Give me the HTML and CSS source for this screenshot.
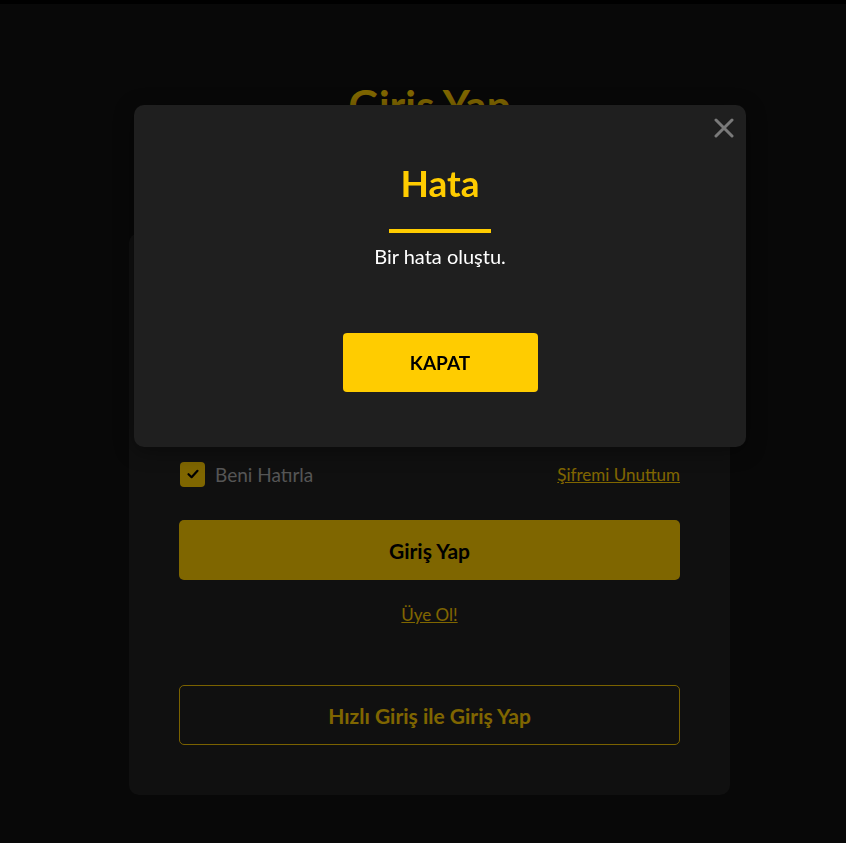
FILE: index.html
```
<!DOCTYPE html>
<html lang="tr">
<head>
    <meta charset="UTF-8">
    <meta name="viewport" content="width=device-width, initial-scale=1.0">
    <title>Giriş Yap</title>
    <link rel="stylesheet" href="styles.css">
</head>
<body>
    <div class="page">
        <h1 class="page-title">Giriş Yap</h1>

        <div class="login-card">
            <div class="field">
                <input type="text" class="input" placeholder="Kullanıcı Adı">
            </div>
            <div class="field">
                <input type="password" class="input" placeholder="Şifre">
            </div>

            <div class="options">
                <label class="remember">
                    <span class="checkbox">
                        <svg width="14" height="14" viewBox="0 0 14 14"><path d="M2.5 7.2 L5.6 10.2 L11.5 3.8" fill="none" stroke="#000" stroke-width="2.2" stroke-linecap="round" stroke-linejoin="round"/></svg>
                    </span>
                    Beni Hatırla
                </label>
                <a href="#" class="link">Şifremi Unuttum</a>
            </div>

            <button class="btn btn-primary">Giriş Yap</button>

            <div class="register">
                <a href="#" class="link">Üye Ol!</a>
            </div>

            <button class="btn btn-outline">Hızlı Giriş ile Giriş Yap</button>
        </div>
    </div>

    <!-- Error modal -->
    <div class="overlay"></div>
    <div class="modal">
        <button class="modal-close" aria-label="Kapat">
            <svg width="20" height="20" viewBox="0 0 20 20"><path d="M2 2 L18 18 M18 2 L2 18" stroke="#7a7a7a" stroke-width="3" stroke-linecap="round"/></svg>
        </button>
        <h2 class="modal-title">Hata</h2>
        <div class="modal-bar"></div>
        <p class="modal-text">Bir hata oluştu.</p>
        <button class="modal-btn">KAPAT</button>
    </div>
</body>
</html>
```

FILE: styles.css
```
/* Reset */
* {
    margin: 0;
    padding: 0;
    box-sizing: border-box;
}

body {
    font-family: Lato, 'Noto Sans', sans-serif;
    background: #101010;
    border-top: 4px solid #000;
    color: #fff;
    min-height: 100vh;
    overflow: hidden;
}

/* Page */
.page {
    width: 601px;
    margin-left: 129px;
    padding-top: 76px;
}

.page-title {
    text-align: center;
    font-size: 42px;
    font-weight: 700;
    color: #ffcc00;
    line-height: 50px;
    height: 153px;
}

/* Login card */
.login-card {
    background: #202020;
    border-radius: 10px;
    padding: 50px 50px 50px;
}

.field {
    margin-bottom: 20px;
}

.input {
    width: 100%;
    height: 60px;
    background: #2a2a2a;
    border: 1px solid #333;
    border-radius: 4px;
    padding: 0 16px;
    font-family: inherit;
    font-size: 17px;
    color: #fff;
}

.options {
    display: flex;
    justify-content: space-between;
    align-items: center;
    height: 24px;
    margin-top: 39px;
    padding-left: 1px;
}

.remember {
    display: flex;
    align-items: center;
    gap: 10px;
    font-size: 19px;
    color: #aaa;
}

.checkbox {
    width: 25px;
    height: 25px;
    border-radius: 4px;
    background: #ffcc00;
    display: flex;
    align-items: center;
    justify-content: center;
}

.link {
    color: #ffcc00;
    font-size: 17px;
    text-decoration: underline;
}

.btn {
    display: block;
    width: 100%;
    height: 60px;
    border-radius: 5px;
    font-family: inherit;
    font-size: 21px;
    font-weight: 700;
    cursor: pointer;
}

.btn-primary {
    margin-top: 34px;
    background: #ffcc00;
    color: #000;
    border: none;
}

.register {
    text-align: center;
    height: 105px;
    padding-top: 24px;
}

.btn-outline {
    background: transparent;
    border: 1px solid #f5c400;
    color: #ffcc00;
}

/* Overlay + modal */
.overlay {
    position: fixed;
    inset: 0;
    background: rgba(0, 0, 0, 0.5);
}

.modal {
    position: absolute;
    top: 105px;
    left: 134px;
    width: 612px;
    height: 342px;
    background: #1f1f1f;
    border-radius: 10px;
    box-shadow: 0 4px 20px rgba(0, 0, 0, 0.4);
    display: flex;
    flex-direction: column;
    align-items: center;
    padding-top: 58px;
}

.modal-close {
    position: absolute;
    top: 9px;
    right: 8px;
    width: 28px;
    height: 28px;
    background: none;
    border: none;
    display: flex;
    align-items: center;
    justify-content: center;
    cursor: pointer;
}

.modal-title {
    font-size: 37px;
    font-weight: 700;
    color: #ffcc00;
    line-height: 40px;
}

.modal-bar {
    width: 102px;
    height: 4px;
    background: #ffcc00;
    margin-top: 26px;
}

.modal-text {
    font-size: 20px;
    line-height: 24px;
    margin-top: 11px;
    color: #fff;
}

.modal-btn {
    margin-top: 65px;
    width: 195px;
    height: 59px;
    background: #ffcc00;
    border: none;
    border-radius: 4px;
    font-family: inherit;
    font-size: 19px;
    font-weight: 700;
    color: #000;
    cursor: pointer;
}
```
